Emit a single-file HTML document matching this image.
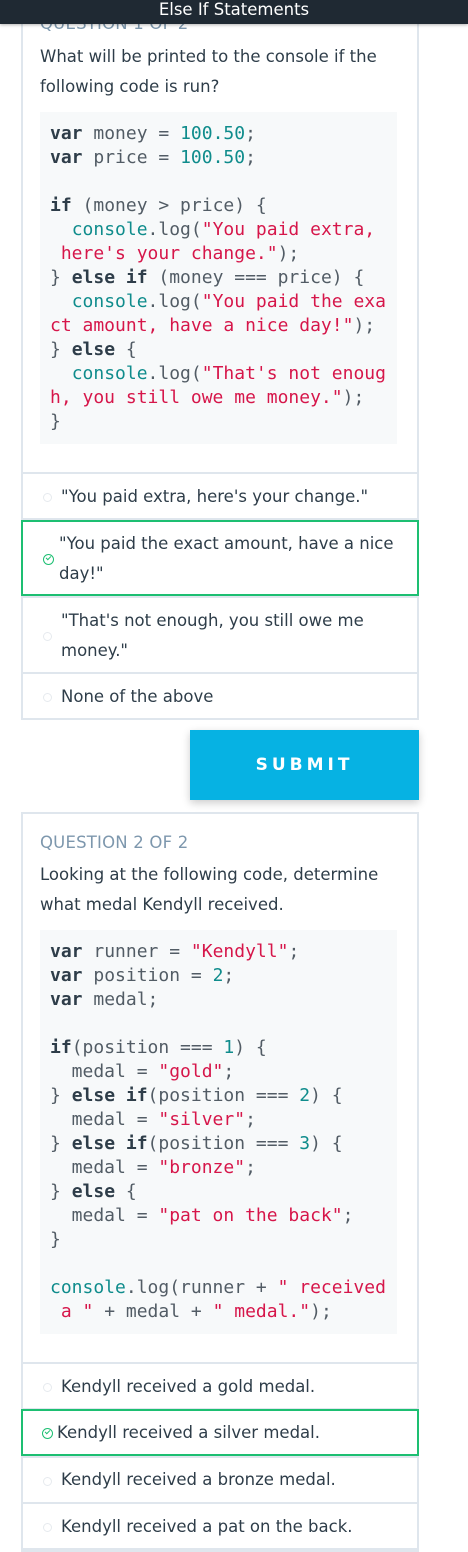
<!DOCTYPE html>
<html><head><meta charset="utf-8"><style>
*{margin:0;padding:0;box-sizing:border-box}
body{width:468px;height:1552px;position:relative;background:#fff;font-family:"DejaVu Sans","Liberation Sans",sans-serif;overflow:hidden;color:#2e3d49}
.hdr{position:absolute;left:0;top:0;width:468px;height:24px;background:#1f2933;color:#fff;font-size:16.5px;text-align:center;line-height:20px;z-index:5;box-shadow:0 1px 3px rgba(0,0,0,.3)}
.card{position:absolute;left:21px;width:398px;border:2px solid #dfe6ed;background:#fff}
.qn{position:absolute;left:40px;font-size:16.5px;color:#7d97ad;letter-spacing:.2px}
.qt{position:absolute;left:40px;font-size:16.5px;line-height:30px;color:#2e3d49;width:370px;white-space:nowrap}
pre{position:absolute;left:40px;width:357px;background:#f7f9fa;font-family:"DejaVu Sans Mono","Liberation Mono",monospace;font-size:18px;line-height:24px;color:#525c65;padding:10px 0 0 10px;white-space:pre}
b{color:#2e3d49}
.n{color:#0f8c8c}.s{color:#d6164a}.c{color:#0f8c8c}
.opt{position:absolute;left:21px;width:398px;border:2px solid #dfe6ed;background:#fff;font-size:16.5px;line-height:30px;color:#2e3d49;padding-left:38px;white-space:nowrap}
.opt.sel{border-color:#1dbf72;padding-left:34px}
.rad{position:absolute;left:20px;width:9px;height:9px;border:1px solid #e6eaee;border-radius:50%}
.chk{position:absolute;left:-20px;width:11px;height:11px;border:1.5px solid #1dbf72;border-radius:50%}
.chk:after{content:"";position:absolute;left:2px;top:1px;width:4px;height:2px;border-left:1.5px solid #1dbf72;border-bottom:1.5px solid #1dbf72;transform:rotate(-45deg)}
.btn{position:absolute;left:190px;top:730px;width:229px;height:70px;background:#06b2e3;color:#fff;font-size:17px;font-weight:bold;letter-spacing:4px;text-align:center;line-height:70px;box-shadow:0 3px 8px rgba(0,0,0,.2)}
</style></head><body>
<div class="hdr">Else If Statements</div>
<div class="card" style="top:0;height:720px"></div>
<div class="qn" style="top:14px">QUESTION 1 OF 2</div>
<div class="qt" style="top:42px">What will be printed to the console if the<br>following code is run?</div>
<pre style="top:112px;height:332px"><b>var</b> money = <span class="n">100.50</span>;
<b>var</b> price = <span class="n">100.50</span>;

<b>if</b> (money &gt; price) {
  <span class="c">console</span>.log(<span class="s">"You paid extra,</span>
<span class="s"> here's your change."</span>);
} <b>else if</b> (money === price) {
  <span class="c">console</span>.log(<span class="s">"You paid the exa</span>
<span class="s">ct amount, have a nice day!"</span>);
} <b>else</b> {
  <span class="c">console</span>.log(<span class="s">"That's not enoug</span>
<span class="s">h, you still owe me money."</span>);
}</pre>
<div class="opt" style="top:472px;height:48px;padding-top:8px"><span class="rad" style="top:19px"></span>"You paid extra, here's your change."</div>
<div class="opt sel" style="top:520px;height:76px;padding-top:7px;padding-left:36px"><span style="position:relative;display:block"><span class="chk" style="top:25px;left:-16px"></span>"You paid the exact amount, have a nice<br>day!"</span></div>
<div class="opt" style="top:596px;height:78px;padding-top:8px"><span class="rad" style="top:34px"></span>"That's not enough, you still owe me<br>money."</div>
<div class="opt" style="top:672px;height:48px;padding-top:8px"><span class="rad" style="top:19px"></span>None of the above</div>
<div class="btn">SUBMIT</div>

<div class="card" style="top:812px;height:740px"></div>
<div class="qn" style="top:833px">QUESTION 2 OF 2</div>
<div class="qt" style="top:860px">Looking at the following code, determine<br>what medal Kendyll received.</div>
<pre style="top:930px;height:404px"><b>var</b> runner = <span class="s">"Kendyll"</span>;
<b>var</b> position = <span class="n">2</span>;
<b>var</b> medal;

<b>if</b>(position === <span class="n">1</span>) {
  medal = <span class="s">"gold"</span>;
} <b>else if</b>(position === <span class="n">2</span>) {
  medal = <span class="s">"silver"</span>;
} <b>else if</b>(position === <span class="n">3</span>) {
  medal = <span class="s">"bronze"</span>;
} <b>else</b> {
  medal = <span class="s">"pat on the back"</span>;
}

<span class="c">console</span>.log(runner + <span class="s">" received</span>
<span class="s"> a "</span> + medal + <span class="s">" medal."</span>);</pre>
<div class="opt" style="top:1362px;height:48px;padding-top:8px"><span class="rad" style="top:19px"></span>Kendyll received a gold medal.</div>
<div class="opt sel" style="top:1409px;height:47px;padding-top:7px;padding-left:34px"><span style="position:relative;display:block"><span class="chk" style="top:10px;left:-15px"></span>Kendyll received a silver medal.</span></div>
<div class="opt" style="top:1456px;height:48px;padding-top:7px"><span class="rad" style="top:19px"></span>Kendyll received a bronze medal.</div>
<div class="opt" style="top:1502px;height:48px;padding-top:8px"><span class="rad" style="top:19px"></span>Kendyll received a pat on the back.</div>
</body></html>
